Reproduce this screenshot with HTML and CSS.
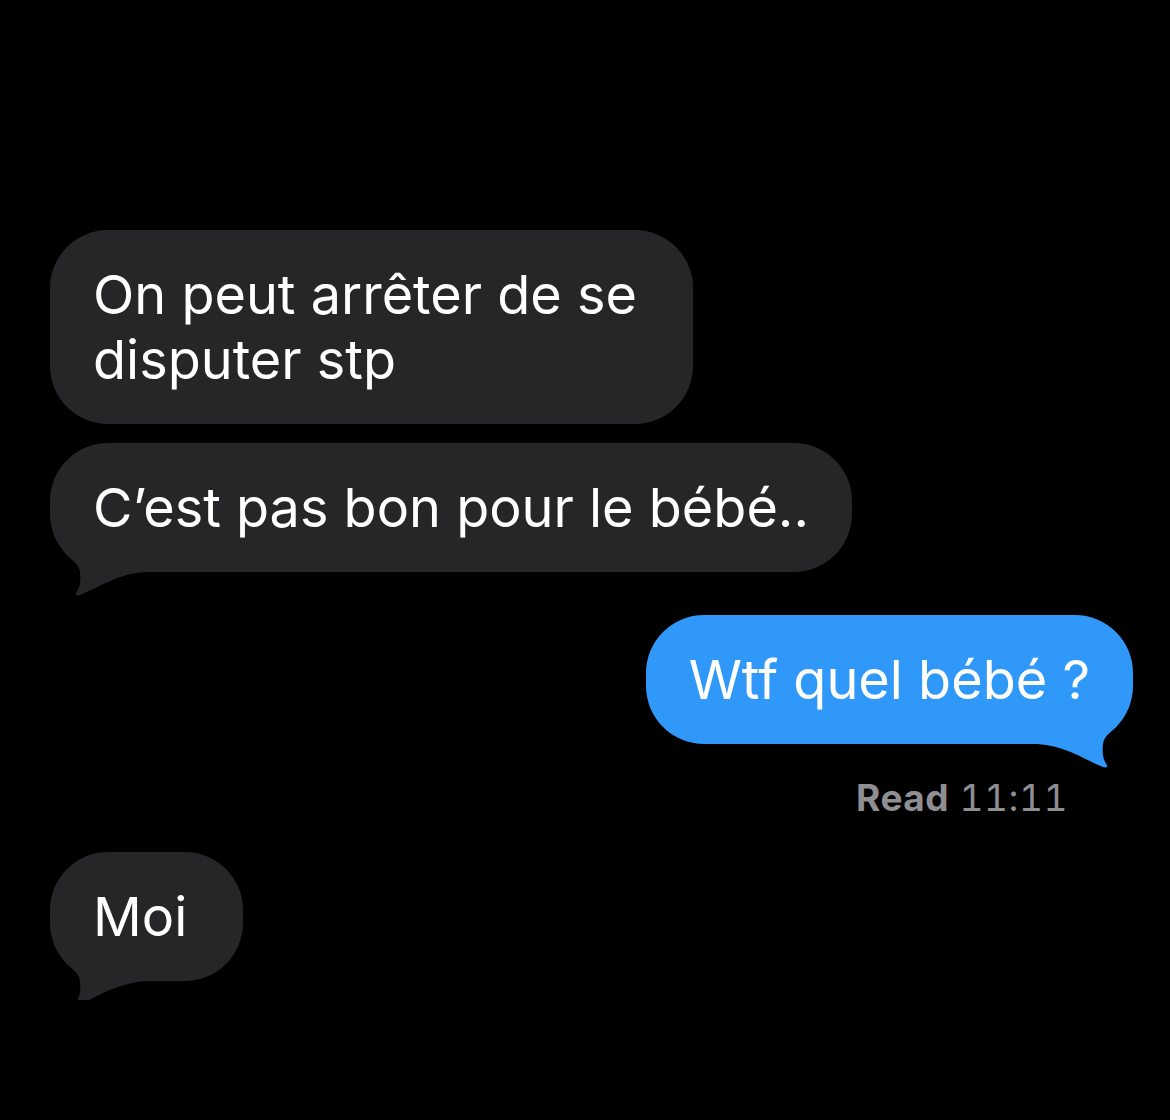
FILE: index.html
```html
<!DOCTYPE html>
<html>
<head>
    <title>Messages</title>
    <link rel="stylesheet" href="styles.css">
</head>
<body>
    <div class="chat">
        <div class="row">
            <div class="bubble in roomy">On peut arrêter de se<br>disputer stp</div>
        </div>
        <div class="row">
            <div class="bubble in">C’est pas bon pour le bébé..
                <svg class="tail-shape" width="96" height="42" viewBox="0 0 96 42"><path d="M16 0 C22 6 29 10 30 18 C31 27 30 34 26 39 C25 41 27 42 30 41 C46 35 66 20 96 18 L96 0 Z"/></svg>
            </div>
        </div>
        <div class="row out-row">
            <div class="bubble out">Wtf quel bébé ?
                <svg class="tail-shape" width="96" height="42" viewBox="0 0 96 42"><path d="M16 0 C22 6 29 10 30 18 C31 27 30 34 26 39 C25 41 27 42 30 41 C46 35 66 20 96 18 L96 0 Z"/></svg>
            </div>
        </div>
        <div class="receipt"><b>Read</b> 11:11</div>
        <div class="row last">
            <div class="bubble in roomy">Moi
                <svg class="tail-shape" width="96" height="42" viewBox="0 0 96 42"><path d="M16 0 C22 6 29 10 30 18 C31 27 30 34 26 39 C25 41 27 42 30 41 C46 35 66 20 96 18 L96 0 Z"/></svg>
            </div>
        </div>
    </div>
</body>
</html>
```

FILE: styles.css
```css
body { margin: 0; background-color: #000; color: #fff; font-family: Inter, "Liberation Sans", sans-serif; }
.chat { display: flex; flex-direction: column; padding: 230px 37px 0 50px; }
.row { display: flex; margin-bottom: 19px; }
.out-row { justify-content: flex-end; margin-top: 24px; margin-bottom: 0; }
.row.last { margin-top: 34px; }
.bubble { position: relative; z-index: 0; padding: 32px 43px; font-size: 54px; line-height: 65px; border-radius: 58px; }
.bubble.roomy { padding-right: 56px; }
.bubble.in { background-color: #262628; }
.bubble.out { background-color: #2f98f8; }
.tail-shape { position: absolute; z-index: -1; left: 0; bottom: -24px; }
.in .tail-shape { fill: #262628; }
.out .tail-shape { fill: #2f98f8; left: auto; right: 0; transform: scaleX(-1); }
.receipt { align-self: flex-end; margin: 34px 65px 0 0; font-size: 37px; line-height: 40px; color: #8e8e93; letter-spacing: 0.5px; font-variant-numeric: tabular-nums; }
.receipt b { font-weight: 700; }
```
